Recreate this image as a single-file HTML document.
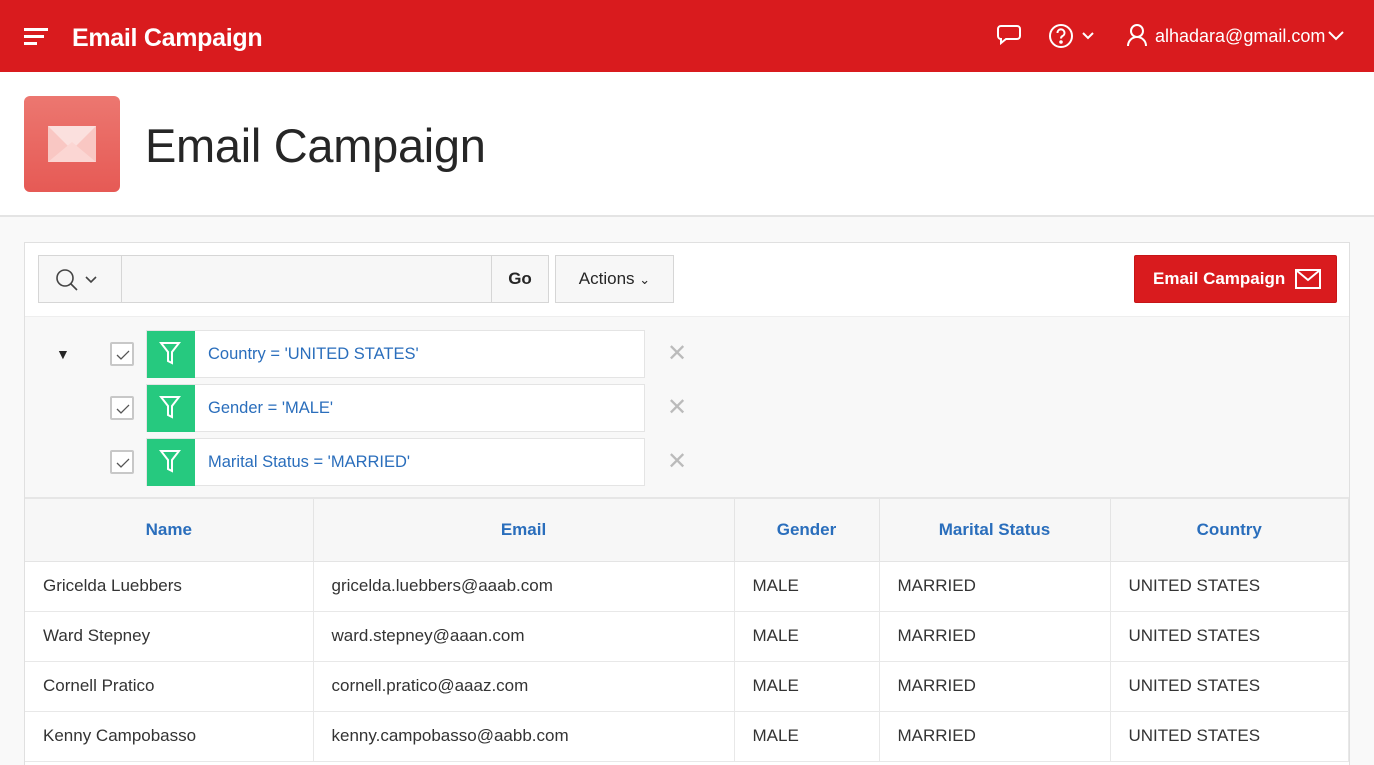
<!DOCTYPE html>
<html style="overflow:hidden;height:765px"><head><style>
*{box-sizing:border-box;margin:0;padding:0}
body{width:1374px;height:765px;overflow:hidden;background:#f9f9f9;font-family:"Liberation Sans",sans-serif;color:#262626;position:relative}
.top{position:absolute;left:0;top:0;width:1374px;height:72px;background:#d91b1e;color:#fff}
.top .title{position:absolute;left:72px;top:24px;font-size:25px;font-weight:bold;letter-spacing:-0.3px}
.hero{position:absolute;left:0;top:72px;width:1374px;height:145px;background:#fff;border-bottom:2px solid #e4e4e4}
.icon{position:absolute;left:24px;top:24px;width:96px;height:96px;border-radius:6px;background:linear-gradient(#ec7770,#e65a55)}
.hero h1{position:absolute;left:145px;top:46px;font-size:47px;font-weight:normal;color:#262626;letter-spacing:-0.3px}
.region{position:absolute;left:24px;top:242px;width:1326px;height:523px;border:1px solid #e0e0e0;border-bottom:none;background:#fff;overflow:hidden}
.tb{position:absolute;left:0;top:0;width:1324px;height:74px;background:#fff;border-bottom:1px solid #eee}
.btn{position:absolute;top:12px;height:48px;border:1px solid #d6d6d6;background:#f7f7f7;font-size:17px;line-height:46px;text-align:center}
.filters{position:absolute;left:0;top:74px;width:1324px;height:182px;background:#f8f8f8;border-bottom:2px solid #e6e6e6}
.f{position:absolute;left:121px;width:499px;height:48px;background:#fff;border:1px solid #e4e4e4}
.f .g{position:absolute;left:0;top:0;width:48px;height:47px;background:#26c97f}
.f span{position:absolute;left:61px;top:14px;font-size:16.5px;color:#2a6ebc}
.cb{position:absolute;left:85px;width:24px;height:24px;border:2px solid #c8c8c8;border-radius:2px;background:#fff}
.x{position:absolute;left:642px;font-size:24px;color:#bbb}
table{position:absolute;left:0;top:256px;border-collapse:collapse;width:1324px}
th{height:62px;background:#f7f7f7;color:#2a6ebc;font-size:17px;border-right:1px solid #e4e4e4;border-bottom:1px solid #e4e4e4}
td{height:50px;font-size:17px;padding-left:18px;border-right:1px solid #e8e8e8;border-bottom:1px solid #e8e8e8;color:#333}
</style></head><body>
<div class="top">
<svg style="position:absolute;left:24px;top:28px" width="24" height="18"><rect x="0" y="0" width="24" height="3" fill="#fff"/><rect x="0" y="7" width="20" height="3" fill="#fff"/><rect x="0" y="14" width="13" height="3" fill="#fff"/></svg>
<div class="title">Email Campaign</div>
<svg style="position:absolute;left:996px;top:24px" width="26" height="24" fill="none" stroke="#fff" stroke-width="2"><path d="M5 2h16a3 3 0 0 1 3 3v7a3 3 0 0 1-3 3H10l-5 4v-4a3 3 0 0 1-3-3V5a3 3 0 0 1 3-3z"/></svg>
<svg style="position:absolute;left:1049px;top:23px" width="52" height="26" fill="none" stroke="#fff" stroke-width="2"><circle cx="12" cy="13" r="11"/><path d="M8.5 10a3.5 3.5 0 1 1 5 3c-1 .6-1.5 1.2-1.5 2.5"/><circle cx="12" cy="19" r="0.8" fill="#fff"/><path d="M34 10l5 5 5-5"/></svg>
<svg style="position:absolute;left:1127px;top:24px" width="20" height="23" fill="none" stroke="#fff" stroke-width="2"><circle cx="10" cy="7" r="6"/><path d="M1 22c0-5 4-9 9-9s9 4 9 9"/></svg>
<div style="position:absolute;left:1155px;top:26px;font-size:18px">alhadara@gmail.com</div>
<svg style="position:absolute;left:1327px;top:30px" width="18" height="12" fill="none" stroke="#fff" stroke-width="2"><path d="M2 2l7 7 7-7"/></svg>
</div>
<div class="hero">
<div class="icon"><svg style="position:absolute;left:12px;top:30px" width="72" height="38"><rect x="12" y="0" width="48" height="36" fill="#f9c7c3"/><path d="M12 0l24 24 24-24z" fill="#fbe0de"/><path d="M12 36l24-20 24 20z" fill="#fbd6d3"/></svg></div>
<h1>Email Campaign</h1>
</div>
<div class="region">
<div class="tb">
<div class="btn" style="left:13px;width:84px"><svg style="position:absolute;left:16px;top:12px" width="50" height="24" fill="none" stroke="#444" stroke-width="1.6"><circle cx="10" cy="10" r="8"/><path d="M16 16l6 6"/><path d="M31 9l5 5 5-5"/></svg></div>
<div class="btn" style="left:96px;width:371px;background:#f7f7f7"></div>
<div class="btn" style="left:466px;width:58px;font-weight:bold">Go</div>
<div class="btn" style="left:530px;width:119px">Actions <span style="font-size:13px">&#8964;</span></div>
<div class="btn" style="left:1109px;width:203px;background:#d91b1e;border-color:#c61517;color:#fff;font-weight:bold;border-radius:2px;text-align:left;padding-left:18px">Email Campaign<svg style="position:absolute;left:160px;top:13px" width="26" height="20" fill="none" stroke="#fff" stroke-width="2"><rect x="1" y="1" width="24" height="18"/><path d="M1 1l12 10 12-10"/></svg></div>
</div>
<div class="filters">
<div style="position:absolute;left:31px;top:29px;font-size:14px">&#9660;</div>
<div class="cb" style="top:25px"></div><div class="cb" style="top:79px"></div><div class="cb" style="top:133px"></div>
<svg style="position:absolute;left:88px;top:28px" width="20" height="130" fill="none" stroke="#555" stroke-width="1.3"><path d="M4 10l4 4 8-8"/><path d="M4 64l4 4 8-8"/><path d="M4 118l4 4 8-8"/></svg>
<div class="f" style="top:13px"><div class="g"></div><span>Country = 'UNITED STATES'</span></div>
<div class="f" style="top:67px"><div class="g"></div><span>Gender = 'MALE'</span></div>
<div class="f" style="top:121px"><div class="g"></div><span>Marital Status = 'MARRIED'</span></div>
<svg style="position:absolute;left:134px;top:24px" width="22" height="140" fill="none" stroke="#fff" stroke-width="2"><path d="M2 2h18l-7 9v11l-4-2v-9z"/><path d="M2 56h18l-7 9v11l-4-2v-9z"/><path d="M2 110h18l-7 9v11l-4-2v-9z"/></svg>
<div class="x" style="top:22px">&#10005;</div><div class="x" style="top:76px">&#10005;</div><div class="x" style="top:130px">&#10005;</div>
</div>
<table>
<tr><th style="width:288px">Name</th><th style="width:421px">Email</th><th style="width:145px">Gender</th><th style="width:231px">Marital Status</th><th>Country</th></tr>
<tr><td>Gricelda Luebbers</td><td>gricelda.luebbers@aaab.com</td><td>MALE</td><td>MARRIED</td><td>UNITED STATES</td></tr>
<tr><td>Ward Stepney</td><td>ward.stepney@aaan.com</td><td>MALE</td><td>MARRIED</td><td>UNITED STATES</td></tr>
<tr><td>Cornell Pratico</td><td>cornell.pratico@aaaz.com</td><td>MALE</td><td>MARRIED</td><td>UNITED STATES</td></tr>
<tr><td>Kenny Campobasso</td><td>kenny.campobasso@aabb.com</td><td>MALE</td><td>MARRIED</td><td>UNITED STATES</td></tr>
</table>
</div>
</body></html>
